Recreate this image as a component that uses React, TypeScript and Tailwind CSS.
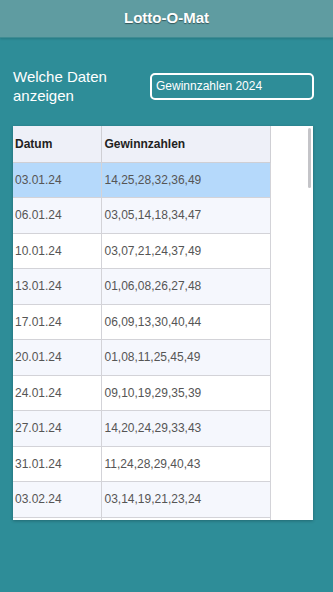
import React from 'react';

const rows: [string, string][] = [
  ['03.01.24', '14,25,28,32,36,49'],
  ['06.01.24', '03,05,14,18,34,47'],
  ['10.01.24', '03,07,21,24,37,49'],
  ['13.01.24', '01,06,08,26,27,48'],
  ['17.01.24', '06,09,13,30,40,44'],
  ['20.01.24', '01,08,11,25,45,49'],
  ['24.01.24', '09,10,19,29,35,39'],
  ['27.01.24', '14,20,24,29,33,43'],
  ['31.01.24', '11,24,28,29,40,43'],
  ['03.02.24', '03,14,19,21,23,24'],
  // next row is only just in view, its text stays hidden below the edge
  ['', ''],
];

const App: React.FC = () => {
  return (
    <div className="h-[592px] w-[333px] overflow-hidden bg-[#2e8d98] font-['Liberation_Sans',Arial,sans-serif]">
      <header className="h-[38px] bg-[#5f9ca1] border-b border-[#3f8c93] flex items-center justify-center shadow-[0_1px_2px_rgba(0,0,0,0.15)]">
        <h1 className="text-white font-bold text-[15px] [text-shadow:0_1px_1px_rgba(0,0,0,0.45)]">Lotto-O-Mat</h1>
      </header>

      <div className="flex items-center pl-[13px] pr-[19px] pt-[29px]">
        <p className="text-white text-[15px] leading-[19px] w-[137px]">
          Welche Daten
          <br />
          anzeigen
        </p>
        <div className="flex-1 h-[27px] border-2 border-white rounded-[5px] flex items-center px-[4px] text-white text-[12px]">
          Gewinnzahlen 2024
        </div>
      </div>

      <div className="mt-[21px] mx-[13px] w-[300px] h-[394px] bg-white flex overflow-hidden shadow-[0_1px_3px_rgba(0,0,0,0.25)] relative">
        <table className="w-[257px] border-collapse text-[12px] table-fixed self-start">
          <colgroup>
            <col className="w-[88px]" />
            <col className="w-[169px]" />
          </colgroup>
          <thead>
            <tr className="h-[36px] bg-[#eef0f8]">
              <th className="text-left font-bold text-[#222] pl-[2px] border-r border-b border-[#cfcfd4]">Datum</th>
              <th className="text-left font-bold text-[#222] pl-[3px] border-r border-b border-[#cfcfd4]">Gewinnzahlen</th>
            </tr>
          </thead>
          <tbody>
            {rows.map(([d, z], i) => (
              <tr
                key={i}
                className={`h-[35.5px] ${i === 0 ? 'bg-[#b5d9fb]' : i % 2 === 1 ? 'bg-[#f5f7fd]' : 'bg-white'}`}
              >
                <td className="pl-[2px] text-[#555] border-r border-b border-[#d3d3d8]">{d}</td>
                <td className="pl-[3px] text-[#555] border-r border-b border-[#d3d3d8]">{z}</td>
              </tr>
            ))}
          </tbody>
        </table>
        <div className="absolute right-[2px] top-[2px] w-[3px] h-[60px] rounded-full bg-[#c4c4c8]" />
      </div>
    </div>
  );
};

export default App;
